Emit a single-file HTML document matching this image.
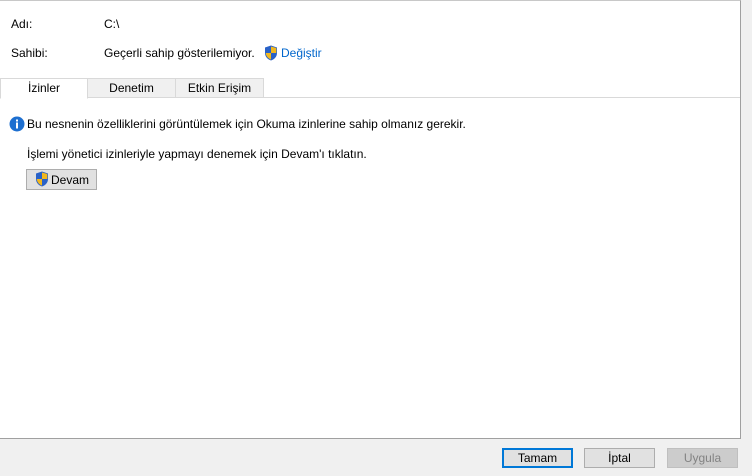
<!DOCTYPE html><html><head><style>
body{margin:0;width:752px;height:476px;background:#f0f0f0;font-family:"Liberation Sans",sans-serif;font-size:12px;color:#000;position:relative;overflow:hidden}
.p{position:absolute;left:0;top:0;width:740px;height:437px;background:#fff;border-top:1px solid #c8c8c8;border-right:1px solid #a0a0a0;border-bottom:1px solid #a0a0a0}
.t{position:absolute;white-space:nowrap}
.tab{position:absolute;top:77px;height:19px;border:1px solid #d9d9d9;background:#f0f0f0;text-align:center;line-height:19px;box-sizing:border-box;height:20px}
.btn{position:absolute;top:448px;width:71px;height:20px;box-sizing:border-box;border:1px solid #adadad;background:#e1e1e1;text-align:center;line-height:18px}
</style></head><body>
<div class="p">
<div class="t" style="left:11px;top:16px">Adı:</div>
<div class="t" style="left:104px;top:16px">C:\</div>
<div class="t" style="left:11px;top:45px">Sahibi:</div>
<div class="t" style="left:104px;top:45px">Geçerli sahip gösterilemiyor.</div>
<svg style="position:absolute;left:264px;top:44px" width="14" height="16" viewBox="0 0 14 16"><path d="M7 0.5L13 2.5V8C13 12 10 14.5 7 15.5C4 14.5 1 12 1 8V2.5Z" fill="#2a62c8"/><path d="M7 1.5V8H12.3V3Z" fill="#f2b81e"/><path d="M7 8V14.6C4.5 13.6 2 11.5 1.8 8Z" fill="#f2b81e"/></svg>
<div class="t" style="left:281px;top:45px;color:#0066cc">Değiştir</div>
<div style="position:absolute;left:0;top:96px;width:740px;border-top:1px solid #d9d9d9"></div>
<div class="tab" style="left:0;width:88px;background:#fff;border-bottom:1px solid #fff;height:21px">İzinler</div>
<div class="tab" style="left:87px;width:89px">Denetim</div>
<div class="tab" style="left:175px;width:89px">Etkin Erişim</div>
<svg style="position:absolute;left:9px;top:115px" width="16" height="16"><circle cx="8" cy="8" r="7.5" fill="#1d6fd0"/><rect x="7" y="6.5" width="2" height="6" fill="#fff"/><rect x="7" y="3.5" width="2" height="2" fill="#fff"/></svg>
<div class="t" style="left:27px;top:116px">Bu nesnenin özelliklerini görüntülemek için Okuma izinlerine sahip olmanız gerekir.</div>
<div class="t" style="left:27px;top:146px">İşlemi yönetici izinleriyle yapmayı denemek için Devam'ı tıklatın.</div>
<div style="position:absolute;left:26px;top:168px;width:71px;height:21px;box-sizing:border-box;border:1px solid #adadad;background:#e1e1e1"></div>
<svg style="position:absolute;left:35px;top:170px" width="14" height="16" viewBox="0 0 14 16"><path d="M7 0.5L13 2.5V8C13 12 10 14.5 7 15.5C4 14.5 1 12 1 8V2.5Z" fill="#2a62c8"/><path d="M7 1.5V8H12.3V3Z" fill="#f2b81e"/><path d="M7 8V14.6C4.5 13.6 2 11.5 1.8 8Z" fill="#f2b81e"/></svg>
<div class="t" style="left:51px;top:172px">Devam</div>
</div>
<div class="btn" style="left:502px;border:2px solid #0078d7;line-height:16px">Tamam</div>
<div class="btn" style="left:584px">İptal</div>
<div class="btn" style="left:667px;background:#ccc;border-color:#bfbfbf;color:#838383">Uygula</div>
</body></html>
